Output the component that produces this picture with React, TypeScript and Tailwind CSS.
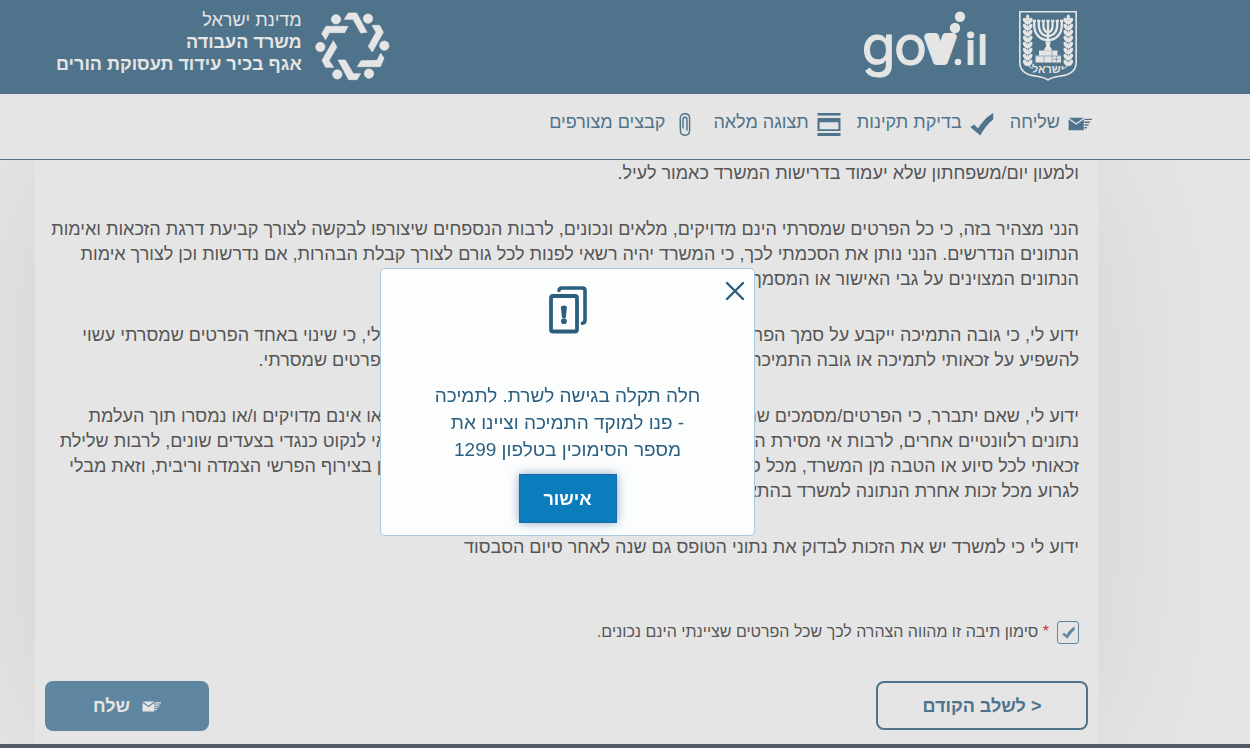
import React, { useState } from 'react';

interface ToolbarItem {
    label: string;
    icon: React.ReactNode;
}

const PARAGRAPHS: string[][] = [
    ['ולמעון יום/משפחתון שלא יעמוד בדרישות המשרד כאמור לעיל.'],
    [
        'הנני מצהיר בזה, כי כל הפרטים שמסרתי הינם מדויקים, מלאים ונכונים, לרבות הנספחים שיצורפו לבקשה לצורך קביעת דרגת הזכאות ואימות',
        'הנתונים הנדרשים. הנני נותן את הסכמתי לכך, כי המשרד יהיה רשאי לפנות לכל גורם לצורך קבלת הבהרות, אם נדרשות וכן לצורך אימות',
        'הנתונים המצוינים על גבי האישור או המסמך.',
    ],
    [
        'ידוע לי, כי גובה התמיכה ייקבע על סמך הפרטים שמסרתי בבקשה זו ובנספחים לה. כמו כן ידוע לי, כי שינוי באחד הפרטים שמסרתי עשוי',
        'להשפיע על זכאותי לתמיכה או גובה התמיכה ולכן עליי לעדכן את המשרד בכל שינוי אשר יחול בפרטים שמסרתי.',
    ],
    [
        'ידוע לי, שאם יתברר, כי הפרטים/מסמכים שנמסרו על ידי אינם נכונים ו/או אינם מלאים וחסרים או אינם מדויקים ו/או נמסרו תוך העלמת',
        'נתונים רלוונטיים אחרים, לרבות אי מסירת הודעה על שינוי בנתונים אלה, יהא המשרד רשאי וזכאי לנקוט כנגדי בצעדים שונים, לרבות שלילת',
        'זכאותי לכל סיוע או הטבה מן המשרד, מכל סוג שהוא, והשבת כל סכום ששולם לי שלא על פי דין בצירוף הפרשי הצמדה וריבית, וזאת מבלי',
        'לגרוע מכל זכות אחרת הנתונה למשרד בהתאם לכל דין.',
    ],
    ['ידוע לי כי למשרד יש את הזכות לבדוק את נתוני הטופס גם שנה לאחר סיום הסבסוד'],
];

const SendIcon = ({ className }: { className: string }) => (
    <svg viewBox="0 0 24 24" className={className} fill="none" aria-hidden="true">
        <path d="M.6 7.2 8.2 12.8 15.8 7.2V18.3H.6Z" fill="currentColor" />
        <path d="M.8 5.8H15.6L8.2 11.2Z" fill="currentColor" />
        <path d="M16.4 7.4H24M16.4 10.2H22M16.4 13H20.6M16.4 15.8H19" stroke="currentColor" strokeWidth="1.4" />
    </svg>
);

const CheckIcon = ({ className }: { className: string }) => (
    <svg viewBox="0 0 24 24" className={className} fill="currentColor" aria-hidden="true">
        <path d="M.3 15 4.2 12.4 8 16.6C12.4 9.4 17 4.6 23.2 1V7.6C18.4 11.4 14.2 16.6 10.2 23.6Z" />
    </svg>
);

const FullViewIcon = ({ className }: { className: string }) => (
    <svg viewBox="0 0 24 24" className={className} fill="currentColor" aria-hidden="true">
        <path d="M.5 1H23.5V3.6H.5ZM.5 21H23.5V24H.5Z" />
        <path d="M.5 6H23.5V19H.5ZM2.6 10.2V17.2H21.4V10.2Z" fillRule="evenodd" />
    </svg>
);

const ClipIcon = ({ className }: { className: string }) => (
    <svg viewBox="0 0 24 24" className={className} fill="none" stroke="currentColor" strokeWidth="1.4" strokeLinecap="round" aria-hidden="true">
        <path d="M7.2 16V6.2C7.2 3.4 9.2 1.8 12 1.8S16.6 3.4 16.6 6.2V18.6C16.6 21.4 14.8 23.2 12 23.2S7.4 21.4 7.4 18.6V9" />
        <path d="M10 16V7.6C10 6.2 10.8 5.2 12 5.2S14 6.2 14 7.6V18" />
    </svg>
);

const LEAF_ROWS = [8, 14, 20, 26, 32, 38, 44, 50];

const Branch = () => (
    <g>
        <path d="M8.7 4V52C8.7 55 11 57 14 57.4" fill="none" stroke="currentColor" strokeWidth="1" />
        <ellipse cx="8.7" cy="6.5" rx="1.6" ry="3" />
        {LEAF_ROWS.map(y => (
            <g key={y}>
                <ellipse cx="6.4" cy={y + 2} rx="1.9" ry="3.4" transform={`rotate(-32 6.4 ${y + 2})`} />
                <ellipse cx="11" cy={y + 2} rx="1.9" ry="3.4" transform={`rotate(32 11 ${y + 2})`} />
            </g>
        ))}
    </g>
);

const StateEmblem = () => (
    <svg viewBox="0 0 58 70" className="h-[70px] w-[58px] text-[#e5e5e5]" fill="currentColor" role="img" aria-label="סמל המדינה">
        <path d="M.8.8H57.2V51C57.2 59 52 63.2 44 64.6C37 65.8 32 66 29 69C26 66 21 65.8 14 64.6C6 63.2.8 59 .8 51Z" fill="none" stroke="currentColor" strokeWidth="1.6" />
        <Branch />
        <g transform="translate(58 0) scale(-1 1)">
            <Branch />
        </g>
        <g fill="none" stroke="currentColor" strokeWidth="2.4">
            <path d="M15.2 10V14C15.2 23 21 29 29 29S42.8 23 42.8 14V10" />
            <path d="M19.8 10V14C19.8 20.5 23.5 25 29 25S38.2 20.5 38.2 14V10" />
            <path d="M24.4 10V14C24.4 18 26 21 29 21S33.6 18 33.6 14V10" />
            <path d="M29 10V39" />
            <path d="M13.4 9.8H17M18 9.8H21.4M22.6 9.8H26M27.2 9.8H30.8M32 9.8H35.4M36.6 9.8H40M41 9.8H44.6" strokeWidth="2" />
        </g>
        <path d="M26.2 30.5H31.8L30.8 35 33.4 39.6H24.6L27.2 35Z" />
        <path d="M20 39.5H38.5V44.5H42V51.5H16.5V44.5H20Z" />
        <path d="M16.5 45H42M25 45.5V51M33 40V51.5M34 48.2H41M37.4 45V51" stroke="#4f738b" strokeWidth=".5" />
        <text x="29" y="62" textAnchor="middle" fontSize="11" fontWeight="700" fontFamily="Liberation Sans, sans-serif">ישראל</text>
    </svg>
);

const GovLogo = () => (
    <svg viewBox="0 0 124 70" className="h-[70px] w-[124px] text-[#e5e5e5]" fill="currentColor" stroke="currentColor" strokeLinejoin="round" fontFamily="Inter, sans-serif" textAnchor="middle" direction="ltr" role="img" aria-label="gov.il">
        <text x="15.5" y="54" fontSize="55" strokeWidth="1">g</text>
        <text x="47.5" y="54" fontSize="55" strokeWidth="1">o</text>
        <text x="77.5" y="50" fontSize="43" fontWeight="700" strokeWidth="8">v</text>
        <text x="107.5" y="53" fontSize="41" fontWeight="400" strokeWidth="2">i</text>
        <text x="119.5" y="53" fontSize="40" fontWeight="400" strokeWidth="2">l</text>
        <g stroke="none">
            <circle cx="95" cy="51" r="3.3" />
            <circle cx="92" cy="17" r="5.2" />
            <circle cx="97" cy="5.8" r="5.2" />
        </g>
    </svg>
);

const MinistryLogo = () => (
    <svg viewBox="12 18 225 213" className="h-[71px] w-[75px] text-[#e5e5e5]" fill="currentColor" stroke="currentColor" strokeWidth="2" strokeLinejoin="round" role="img" aria-label="משרד העבודה">
        <circle cx="75" cy="43" r="14" />
        <circle cx="171" cy="41" r="14" />
        <circle cx="220" cy="122" r="14" />
        <circle cx="174" cy="206" r="14" />
        <circle cx="79" cy="208" r="14" />
        <circle cx="28" cy="126" r="14" />
        <path d="M100 43 112 24H137L168 82 149 84 126 43Z" />
        <path d="M183 61H206L217 82 184 141 172 124 195 82Z" />
        <path d="M139 185 150 167 198 166 209 145 219 160 208 185Z" />
        <path d="M81 165H103L127 206H149L138 224H113Z" />
        <path d="M67 107 78 126 54 166 68 187H44L33 166Z" />
        <path d="M45 64H111L101 83H55L44 104 32 86Z" />
    </svg>
);

const AlertPagesIcon = () => (
    <svg viewBox="0 0 38 48" className="h-12 w-[38px] text-[#2a5f80]" fill="none" stroke="currentColor" strokeLinecap="round" aria-hidden="true">
        <rect x="2" y="10" width="26" height="35.5" rx="2" strokeWidth="3.8" />
        <path d="M10 4.5C10 3 11 2 12.5 2H33.5C35 2 36 3 36 4.5V34C36 36 35 37 33.4 37.2" strokeWidth="3.6" />
        <path d="M11.9 21.6C11.9 18.8 17.9 18.8 17.9 21.6L16.9 31C16.7 32.6 13.1 32.6 12.9 31Z" fill="currentColor" stroke="none" />
        <circle cx="14.9" cy="35.2" r="2.9" fill="currentColor" stroke="none" />
    </svg>
);

const TOOLBAR: ToolbarItem[] = [
    { label: 'שליחה', icon: <SendIcon className="h-6 w-6" /> },
    { label: 'בדיקת תקינות', icon: <CheckIcon className="h-6 w-6" /> },
    { label: 'תצוגה מלאה', icon: <FullViewIcon className="h-6 w-6" /> },
    { label: 'קבצים מצורפים', icon: <ClipIcon className="h-6 w-6" /> },
];

const ErrorDialog = ({ onClose }: { onClose: () => void }) => (
    <div className="fixed inset-y-0 right-[115px] left-0 z-50 flex items-center justify-center pt-14">
        <div role="dialog" aria-modal="true" aria-labelledby="error-text" className="relative flex h-[268px] w-[375px] flex-col items-center rounded-[5px] border border-[#a6cbe3] bg-[#fcfefe] pt-[17px]">
            <button onClick={onClose} aria-label="סגירה" className="absolute top-3 right-[9px] text-[#2a5f80]">
                <svg viewBox="0 0 20 20" className="h-5 w-5" stroke="currentColor" strokeWidth="2.4" strokeLinecap="round" aria-hidden="true">
                    <path d="M2 2 18 18M18 2 2 18" />
                </svg>
            </button>
            <AlertPagesIcon />
            <p id="error-text" className="mt-12 w-[268px] text-center text-[19px] leading-[27px] text-[#2a5f80]">
                חלה תקלה בגישה לשרת. לתמיכה - פנו למוקד התמיכה וציינו את מספר הסימוכין בטלפון 1299
            </p>
            <button onClick={onClose} className="mt-[11px] h-[49px] w-[98px] border border-[#1a6ba5] bg-[#0b7dbd] text-lg font-bold text-white shadow-[0_0_10px_rgba(40,90,150,0.5)]">
                אישור
            </button>
        </div>
    </div>
);

const App: React.FC = () => {
    const [dialogOpen, setDialogOpen] = useState(true);
    const [confirmed, setConfirmed] = useState(true);

    return (
        <div dir="rtl" className="flex h-screen flex-col overflow-hidden bg-[#e5e5e5] font-['Liberation_Sans',Arial,sans-serif] text-lg text-[#555]">
            {/* Header */}
            <header className="z-10 flex h-[94px] shrink-0 items-start justify-between bg-[#4f738b] pt-[9px] pr-[173px] pl-14 text-[#e5e5e5]">
                <div className="flex gap-8 pt-0.5">
                    <StateEmblem />
                    <GovLogo />
                </div>
                <div className="flex items-start gap-[13px]">
                    <div className="pt-0.5">
                        <MinistryLogo />
                    </div>
                    <div className="text-lg leading-[22px] font-bold">
                        <p className="font-normal">מדינת ישראל</p>
                        <p>משרד העבודה</p>
                        <p>אגף בכיר עידוד תעסוקת הורים</p>
                    </div>
                </div>
            </header>

            {/* Toolbar */}
            <nav className="z-10 flex h-[66px] shrink-0 items-start gap-4 border-b border-[#4f738b] bg-[#e5e5e5] pt-[18px] pr-[158px] text-[#4f738b]">
                {TOOLBAR.map(item => (
                    <button key={item.label} className="flex items-start gap-2 leading-5">
                        {item.icon}
                        <span>{item.label}</span>
                    </button>
                ))}
            </nav>

            {/* Form */}
            <main className="mr-[152px] ml-[35px] flex min-h-0 flex-1 flex-col bg-[#e5e5e5] pt-px shadow-[0_0_150px_rgba(0,0,0,0.08)]">
                <div className="flex flex-col gap-[31px] pr-[19px] leading-[25px]">
                    {PARAGRAPHS.map(lines => (
                        <p key={lines[0]} className="whitespace-nowrap">
                            {lines.map(line => (
                                <span key={line} className="block">{line}</span>
                            ))}
                        </p>
                    ))}
                </div>
                <label className="mt-[60px] flex items-center gap-2 pr-[19px] text-base text-[#555]">
                    <span className="relative flex h-[23px] w-[22px] items-center justify-center">
                        <input
                            type="checkbox"
                            checked={confirmed}
                            onChange={e => setConfirmed(e.target.checked)}
                            className="absolute inset-0 appearance-none rounded-[3px] border border-[#5e86a0]"
                        />
                        {confirmed && <CheckIcon className="relative h-[13px] w-[13px] text-[#5e86a0]" />}
                    </span>
                    <span>
                        <span className="text-[#c43c35]">*</span> סימון תיבה זו מהווה הצהרה לכך שכל הפרטים שציינתי הינם נכונים.
                    </span>
                </label>
                <div className="mt-[37px] flex items-start justify-between px-[10px] font-bold">
                    <button className="h-[49px] w-[212px] rounded-lg border-2 border-[#4f738b] text-[#4f738b]">&lt; לשלב הקודם</button>
                    <button className="flex h-[50px] w-[164px] items-center justify-center gap-3 rounded-lg bg-[#5e86a0] text-[#e5e5e5]">
                        <SendIcon className="h-[19px] w-[19px]" />
                        שלח
                    </button>
                </div>
            </main>
            <footer className="z-10 h-1 shrink-0 bg-[#4f5b66]" />

            {dialogOpen && <ErrorDialog onClose={() => setDialogOpen(false)} />}
        </div>
    );
};

export default App;
